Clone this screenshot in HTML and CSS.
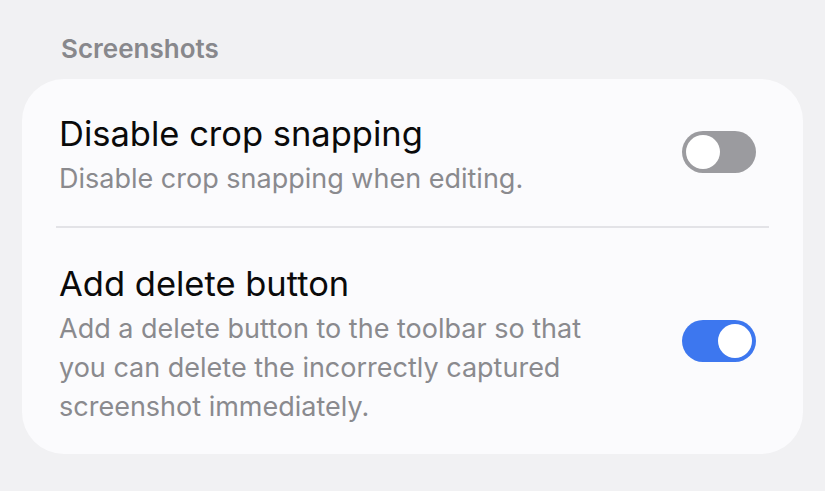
FILE: index.html
```html
<!DOCTYPE html>
<html lang="en">
<head>
    <meta charset="UTF-8">
    <meta name="viewport" content="width=device-width, initial-scale=1.0">
    <title>Screenshots</title>
    <link rel="stylesheet" href="styles.css">
</head>
<body>

    <h2 class="section-title">Screenshots</h2>

    <div class="card">
        <!-- crop snapping -->
        <div class="row">
            <div class="text">
                <div class="title">Disable crop snapping</div>
                <div class="desc">Disable crop snapping when editing.</div>
            </div>
            <div class="switch"><span class="thumb"></span></div>
        </div>

        <!-- delete button -->
        <div class="row">
            <div class="text">
                <div class="title">Add delete button</div>
                <div class="desc">Add a delete button to the toolbar so that you can delete the incorrectly captured screenshot immediately.</div>
            </div>
            <div class="switch on"><span class="thumb"></span></div>
        </div>
    </div>

</body>
</html>
```

FILE: styles.css
```css
body {
    font-family: Inter, Roboto, "Noto Sans", sans-serif;
    background: #f1f1f3;
    margin: 0;
    padding: 34px 22px 0 22px;
}
.section-title {
    font-size: 26px;
    line-height: 30px;
    font-weight: 600;
    color: #88888c;
    margin: 0 0 15px 39px;
}
.card {
    background: #fbfbfd;
    border-radius: 42px;
    padding: 0 34px;
}
.row {
    display: flex;
    align-items: center;
    padding: 35px 13px 28px 3px;
}
.row + .row {
    border-top: 2px solid #e3e3e7;
    padding-top: 36px;
    padding-bottom: 28px;
}
.text {
    flex: 1;
    max-width: 550px;
}
.title {
    font-size: 34.5px;
    line-height: 40px;
    color: #0a0a0a;
}
.desc {
    margin-top: 5px;
    font-size: 27px;
    line-height: 39px;
    color: #8a8a8e;
}
.switch {
    margin-left: auto;
    margin-bottom: 9px;
    width: 74px;
    height: 42px;
    border-radius: 21px;
    background: #9b9b9f;
    display: flex;
    align-items: center;
    padding: 0 4px;
    box-sizing: border-box;
}
.thumb {
    width: 34px;
    height: 34px;
    border-radius: 50%;
    background: #fff;
}
.switch.on {
    background: #3d77ef;
    justify-content: flex-end;
}
```
